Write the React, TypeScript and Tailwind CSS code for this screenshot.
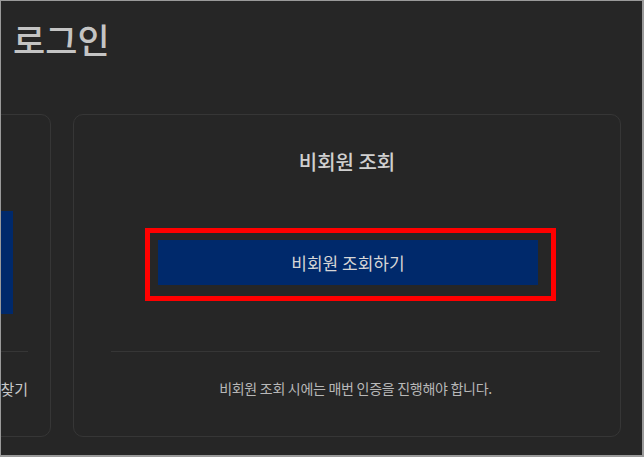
export default function App() {
  return (
    <div
      className="w-[644px] h-[457px] overflow-hidden bg-[#262626] border-l border-t border-r-2 border-b-2 border-[#9a9a9a]"
      style={{ fontFamily: '"Noto Sans CJK KR", "Noto Sans", sans-serif' }}
    >
      {/* page title */}
      <h1 className="pt-[18px] pl-[12px] text-[35px] leading-[40px] font-medium text-[#c4c4c4]">
        로그인
      </h1>

      <div className="mt-[55px] flex gap-[22px]">
        {/* member login card, mostly cut off */}
        <div className="ml-[-498px] w-[548px] h-[323px] shrink-0 rounded-[10px] border border-[#363636] flex flex-col">
          <div className="mt-[96px] mr-[37px] ml-[84px] h-[103px] bg-[#00296b]" />
          <div className="mt-[37px] mr-[22px] ml-[37px] h-px bg-[#363636]" />
          <p className="mt-[27px] mr-[22px] text-right text-[15px] leading-[20px] text-[#c8c8c8]">
            아이디 · 비밀번호 찾기
          </p>
        </div>

        {/* guest order lookup card */}
        <div className="w-[548px] h-[323px] shrink-0 rounded-[10px] border border-[#363636] flex flex-col">
          <h2 className="pt-[35px] text-center text-[20px] leading-[24px] font-medium text-[#d0d0d0]">
            비회원 조회
          </h2>
          <div className="relative mt-[66px] ml-[84px] mr-[82px]">
            <button className="w-full h-[45px] bg-[#00296b] text-[17px] text-[#d6d6d6]">
              비회원 조회하기
            </button>
            <span className="absolute -left-[13px] -top-[12px] -right-[18px] -bottom-[16px] border-[5px] border-[#ff0000] pointer-events-none" />
          </div>
          <div className="mt-[66px] ml-[37px] mr-[20px] h-px bg-[#363636]" />
          <p className="mt-[26px] ml-[37px] mr-[20px] text-center text-[14px] leading-[20px] tracking-[-0.02em] text-[#b8b8b8]">
            비회원 조회 시에는 매번 인증을 진행해야 합니다.
          </p>
        </div>
      </div>
    </div>
  );
}
